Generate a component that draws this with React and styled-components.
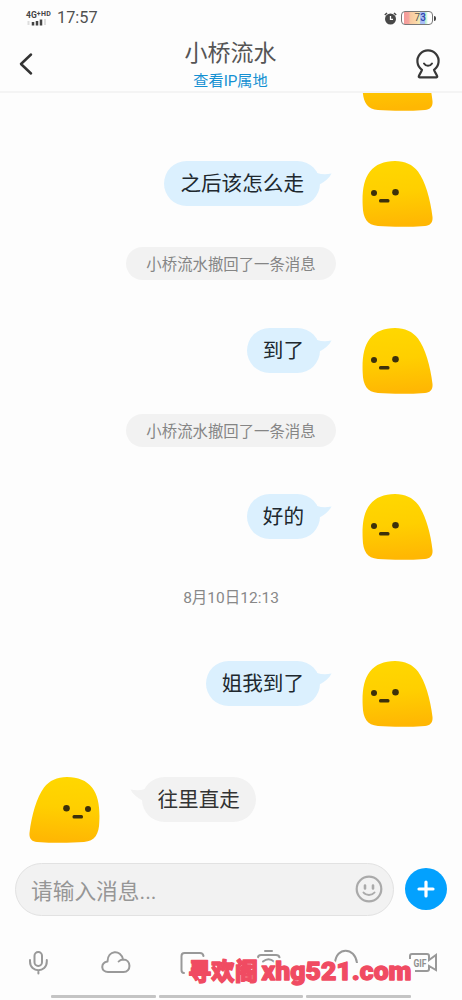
import React from 'react';
import styled, { createGlobalStyle } from 'styled-components';

const GlobalStyle = createGlobalStyle`
  * {
    box-sizing: border-box;
  }

  body {
    margin: 0;
    background: #fdfdfd;
    font-family: Roboto, 'Noto Sans CJK SC', sans-serif;
  }

  svg {
    display: block;
    flex-shrink: 0;
  }
`;

const Screen = styled.div`
  position: relative;
  display: flex;
  flex-direction: column;
  width: 462px;
  height: 1000px;
  overflow: hidden;
  background: #fdfdfd;
`;

const StatusBar = styled.div`
  display: flex;
  align-items: center;
  justify-content: space-between;
  height: 36px;
  padding: 0 26px;
`;

const StatusGroup = styled.div`
  display: flex;
  align-items: center;
  gap: ${(props) => props.$gap}px;
`;

const Network = styled.div`
  display: flex;
  flex-direction: column;
  width: 26px;
  height: 15px;
`;

const NetworkLabel = styled.div`
  display: flex;
  height: 8px;
  font-size: 8.5px;
  font-weight: 700;
  line-height: 8px;
  color: #444;

  small {
    font-size: 7px;
    line-height: 6px;
    letter-spacing: 0.4px;
  }
`;

const Clock = styled.span`
  font-family: Roboto, sans-serif;
  font-size: 16.3px;
  line-height: 20px;
  color: #505050;
`;

const Battery = styled.div`
  display: flex;
  align-items: center;
`;

const BatteryBody = styled.div`
  width: 32px;
  height: 14px;
  border: 1px solid #777;
  border-radius: 4px;
  background: linear-gradient(
    90deg,
    #fff 6%,
    #f59a9a 7%,
    #f5a79e 24%,
    #f8c7a0 26%,
    #fbd8a8 48%,
    #f4ecb0 58%,
    #a8bdf5 62%,
    #a8bdf5 75%,
    #b4efd0 78%,
    #e0faec 84%,
    #fff 86%
  );
  font-size: 10px;
  font-weight: 400;
  line-height: 12px;
  padding-left: 12.5px;
  color: #555;

  b {
    font-weight: 500;
    color: #2c45ad;
  }
`;

const BatteryTip = styled.div`
  width: 2px;
  height: 5px;
  margin-left: 1px;
  border-radius: 0 2px 2px 0;
  background: #444;
`;

const Header = styled.header`
  display: flex;
  align-items: center;
  justify-content: space-between;
  height: 57px;
  padding: 0 20px 0 18px;
  border-bottom: 2px solid #f4f4f4;
`;

const Title = styled.div`
  display: flex;
  flex-direction: column;
  align-items: center;
  padding: 3px 0 0 13px;
`;

const Name = styled.div`
  font-size: 23px;
  line-height: 30px;
  color: #555;
`;

const Location = styled.div`
  font-size: 15.2px;
  line-height: 20px;
  margin-top: 2px;
  color: #1590d2;
`;

const Chat = styled.main`
  flex: none;
  height: 761px;
  overflow: hidden;
`;

const Message = styled.div`
  display: flex;
  flex-direction: ${(props) => (props.$mine ? 'row-reverse' : 'row')};
  gap: 42px;
  height: 66px;
  padding: 0 29px 0 28.5px;
  margin-top: ${(props) => props.$top}px;
`;

const Bubble = styled.div`
  position: relative;
  height: 45px;
  padding: 0 16px;
  border-radius: 23px;
  background: ${(props) => (props.$mine ? '#dbf0fe' : '#f2f2f2')};
  font-size: 20.6px;
  line-height: 47px;
  color: ${(props) => (props.$mine ? '#20282e' : '#333')};
`;

const Tail = styled.svg`
  position: absolute;
  top: 8px;
  ${(props) => (props.$mine ? 'right: -12px;' : 'left: -12px; transform: scaleX(-1);')}
`;

const Notice = styled.div`
  width: 210px;
  height: 33px;
  margin: 20px auto 0;
  border-radius: 17px;
  background: #f2f2f2;
  font-size: 15.4px;
  line-height: 36px;
  text-align: center;
  color: #858585;
`;

const DateLine = styled.div`
  height: 20px;
  margin-top: 28px;
  font-size: 15.5px;
  line-height: 20px;
  text-align: center;
  color: #888;
`;

const Composer = styled.div`
  display: flex;
  align-items: center;
  gap: 11px;
  height: 70px;
  padding: 0 15px;
`;

const InputBox = styled.div`
  display: flex;
  align-items: center;
  justify-content: space-between;
  width: 379px;
  height: 53px;
  padding: 0 10px 0 15px;
  border: 1px solid #e2e2e2;
  border-radius: 27px;
  background: #f2f2f2;
  font-size: 21.7px;
  color: #969696;
`;

const AddButton = styled.button`
  display: flex;
  align-items: center;
  justify-content: center;
  width: 42px;
  height: 42px;
  padding: 0;
  border: none;
  border-radius: 50%;
  background: #03a1fe;
`;

const Toolbar = styled.div`
  display: flex;
  align-items: center;
  justify-content: space-between;
  height: 71px;
  padding: 6px 24px 0;
`;

const HomeBars = styled.div`
  display: flex;
  gap: 3px;
  padding-left: 51px;
`;

const HomeBar = styled.div`
  width: ${(props) => props.$width}px;
  height: 3px;
  border-radius: 1px;
  background: #c4c4c4;
`;

const Watermark = styled.svg`
  position: absolute;
  left: 184px;
  top: 946px;
  font-weight: 900;
  stroke-linejoin: round;
  paint-order: stroke;
`;

const Halo = styled.g`
  fill: #fdfdfd;
  stroke: #fdfdfd;
  stroke-width: 5px;
`;

const Ink = styled.g`
  fill: #f04b62;
  stroke: #f04b62;
  stroke-width: 1.3px;
`;

function WatermarkText() {
  return (
    <>
      <text
        x="4"
        y="34"
        fontFamily="'Noto Sans CJK SC', sans-serif"
        fontSize="24"
        textLength="70"
        lengthAdjust="spacingAndGlyphs"
      >
        寻欢阁
      </text>
      <text
        x="77.5"
        y="34"
        fontFamily="Roboto, sans-serif"
        fontSize="26.5"
        textLength="150"
        lengthAdjust="spacingAndGlyphs"
      >
        xhg521.com
      </text>
    </>
  );
}

function Avatar({ flip }) {
  return (
    <svg width="71" height="66" viewBox="0 0 71 66">
      <defs>
        <linearGradient id="skin" x1="0" y1="0" x2="0.08" y2="1">
          <stop offset="0" stopColor="#ffd800" />
          <stop offset="0.5" stopColor="#ffcf00" />
          <stop offset="1" stopColor="#ffb703" />
        </linearGradient>
      </defs>
      <g transform={flip ? 'translate(71 0) scale(-1 1)' : undefined}>
        <path
          d="M33 0C43 0 50.500 3.500 56 10.500C63 20 68.500 38 70.500 56C71 62 68 64.500 63 65C47 66.200 29 66 16 65C5 64 1 57 0.700 45C0 31 1.500 18.500 8 10.500C13.500 3.500 22 0 33 0Z"
          fill="url(#skin)"
        />
        <circle cx="12" cy="32" r="3" fill="#3c300b" />
        <circle cx="33.500" cy="31.300" r="3.300" fill="#3c300b" />
        <rect x="17" y="38" width="10.500" height="3.600" rx="1.500" fill="#3c300b" />
      </g>
    </svg>
  );
}

function ChatMessage({ text, mine, top }) {
  return (
    <Message $mine={mine} $top={top}>
      <Avatar flip={!mine} />
      <Bubble $mine={mine}>
        {text}
        <Tail $mine={mine} width="24" height="18" viewBox="0 0 24 18">
          <path
            d="M1 -1C8 4.500 14 6.500 23.500 4.500C21 9.500 17 12.500 11.500 15.500L3 15Z"
            fill={mine ? '#dbf0fe' : '#f2f2f2'}
          />
        </Tail>
      </Bubble>
    </Message>
  );
}

function App() {
  return (
    <>
      <GlobalStyle />
      <Screen>
        <StatusBar>
          <StatusGroup $gap={5}>
            <Network>
              <NetworkLabel>
                4G<small>+HD</small>
              </NetworkLabel>
              <svg width="22" height="7" viewBox="0 0 22 7">
                <path d="M2.500 2V6" stroke="#ddd" strokeWidth="2" />
                <path d="M7 3V6.500M11 2V6.500M15 0.500V6.500" stroke="#444" strokeWidth="2.500" />
                <path d="M19 0V6" stroke="#ddd" strokeWidth="2" />
              </svg>
            </Network>
            <Clock>17:57</Clock>
          </StatusGroup>
          <StatusGroup $gap={4}>
            <svg width="13" height="13" viewBox="0 0 13 13" fill="none">
              <circle cx="6.500" cy="7" r="5.500" fill="#484848" />
              <path d="M0.800 3L3 1M12.200 3L10 1" stroke="#484848" strokeWidth="1.500" />
              <path d="M6.500 4V7.300H9" stroke="#fff" strokeWidth="1.300" />
            </svg>
            <Battery>
              <BatteryBody>
                7<b>3</b>
              </BatteryBody>
              <BatteryTip />
            </Battery>
          </StatusGroup>
        </StatusBar>

        <Header>
          <svg width="16" height="24" viewBox="0 0 16 24" fill="none">
            <path
              d="M13 2.500L3 12L13 21.500"
              stroke="#333"
              strokeWidth="2.500"
              strokeLinecap="round"
              strokeLinejoin="round"
            />
          </svg>
          <Title>
            <Name>小桥流水</Name>
            <Location>查看IP属地</Location>
          </Title>
          <svg width="28" height="30" viewBox="0 0 28 30" fill="none">
            <path
              d="M8 20.800A10.600 10.600 0 1 1 20 20.800C20.500 23 22.500 25 23.200 27.300C23.300 28 23 28.300 22.300 28.300H5.700C5 28.300 4.700 28 4.800 27.300C5.500 25 7.500 23 8 20.800Z"
              stroke="#383838"
              strokeWidth="2.200"
              strokeLinejoin="round"
            />
            <path
              d="M10 14.500C12 17.600 16 17.600 18 14.500"
              stroke="#383838"
              strokeWidth="2"
              strokeLinecap="round"
            />
          </svg>
        </Header>

        <Chat>
          <ChatMessage mine text="" top={-48} />
          <ChatMessage mine text="之后该怎么走" top={50} />
          <Notice>小桥流水撤回了一条消息</Notice>
          <ChatMessage mine text="到了" top={48} />
          <Notice>小桥流水撤回了一条消息</Notice>
          <ChatMessage mine text="好的" top={47} />
          <DateLine>8月10日12:13</DateLine>
          <ChatMessage mine text="姐我到了" top={53} />
          <ChatMessage text="往里直走" top={49.5} />
        </Chat>

        <Composer>
          <InputBox>
            请输入消息...
            <svg width="28" height="28" viewBox="0 0 28 28" fill="none">
              <circle cx="14" cy="14" r="12.300" stroke="#aaa" strokeWidth="2.200" />
              <path d="M10 10.500V13.500M18 10.500V13.500" stroke="#aaa" strokeWidth="2.600" strokeLinecap="round" />
              <path d="M8.500 17.500C11 20.700 17 20.700 19.500 17.500" stroke="#aaa" strokeWidth="2" strokeLinecap="round" />
            </svg>
          </InputBox>
          <AddButton>
            <svg width="18" height="18" viewBox="0 0 18 18">
              <path d="M9 2V16M2 9H16" stroke="#fff" strokeWidth="3.200" strokeLinecap="round" />
            </svg>
          </AddButton>
        </Composer>

        <Toolbar>
          <svg width="30" height="30" viewBox="0 0 30 30" fill="none" stroke="#999" strokeWidth="2">
            <rect x="10.500" y="4" width="7.500" height="14" rx="3.700" />
            <path d="M6 12V13.500C6 25 22.800 25 22.800 13.500V12M14.400 22.500V25.500" strokeLinecap="round" />
          </svg>
          <svg width="30" height="30" viewBox="0 0 30 30" fill="none" stroke="#999" strokeWidth="2">
            <path
              d="M7 24C0 24 -1 15 6.500 13.500C6.500 2 20 1 22 11.500C30.500 11.500 30.500 24 22.500 24ZM22 11.500C20 11.600 18.500 12.500 17.700 13.500"
              strokeLinecap="round"
              strokeLinejoin="round"
            />
          </svg>
          <svg width="30" height="30" viewBox="0 0 30 30" fill="none" stroke="#999" strokeWidth="2">
            <path d="M6 25Q3.500 25 3.500 22V8Q3.500 5 6.500 5H22Q25 5 25.500 8" strokeLinecap="round" />
          </svg>
          <svg width="30" height="30" viewBox="0 0 30 30" fill="none" stroke="#999" strokeWidth="2">
            <path d="M11 3H18" strokeLinecap="round" />
            <path d="M4 9.500Q4 7 7 7H22Q25 7 25.500 9.500M9 13.500Q14.500 9 20 13.500" strokeLinecap="round" />
          </svg>
          <svg width="30" height="30" viewBox="0 0 30 30" fill="none" stroke="#999" strokeWidth="2">
            <path d="M4 15C5 -1.500 24 -1.500 26 15" />
          </svg>
          <svg width="30" height="30" viewBox="0 0 30 30" fill="none">
            <path
              d="M2 11V8Q2 6 4 6H19Q21 6 21 8V12L28 7V22L21 18V21Q21 23 19 23H7"
              stroke="#999"
              strokeWidth="2"
            />
            <text
              x="5.500"
              y="18.500"
              fontFamily="Roboto, sans-serif"
              fontWeight="700"
              fontSize="11"
              textLength="13"
              lengthAdjust="spacingAndGlyphs"
              fill="#909090"
            >
              GIF
            </text>
          </svg>
        </Toolbar>

        <HomeBars>
          <HomeBar $width={105} />
          <HomeBar $width={144} />
          <HomeBar $width={105} />
        </HomeBars>

        <Watermark width="240" height="50" viewBox="0 0 240 50">
          <Halo aria-hidden="true">
            <WatermarkText />
          </Halo>
          <Ink>
            <WatermarkText />
          </Ink>
        </Watermark>
      </Screen>
    </>
  );
}

export default App;
